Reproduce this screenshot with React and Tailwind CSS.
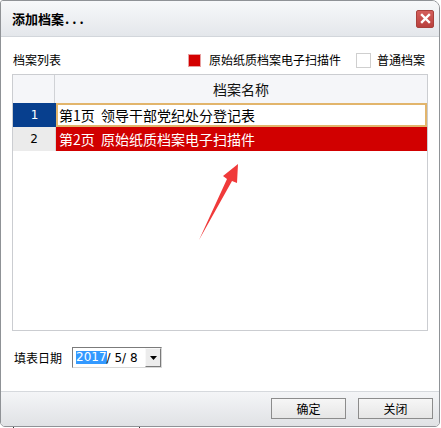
import React from "react";

const font = { fontFamily: '"Noto Sans CJK SC", "Noto Sans", sans-serif' };

export default function App() {
  return (
    <div className="relative w-[441px] h-[428px] bg-white overflow-hidden" style={font}>
      <div className="flex flex-col w-[440px] h-[427px] border border-[#8f9296] rounded-tr-[8px] rounded-tl-[3px] rounded-b-[5px] overflow-hidden">
        {/* title bar */}
        <div className="h-[36px] shrink-0 flex items-center justify-between pl-[11px] pr-[5px] border-b border-[#d2d6db] bg-gradient-to-b from-[#f7f8fa] to-[#e4e7eb]">
          <span className="text-[13px] font-bold text-black leading-none">添加档案<span className="tracking-[3px] ml-[1px]">...</span></span>
          <div className="w-[18px] h-[18px] rounded-[2px] bg-gradient-to-b from-[#d45e5b] to-[#b9403d] border border-[#a8403c] flex items-center justify-center">
            <svg width="11" height="11" viewBox="0 0 11 11">
              <path d="M2 2 L9 9 M9 2 L2 9" stroke="white" strokeWidth="2.4" strokeLinecap="square" />
            </svg>
          </div>
        </div>

        {/* body */}
        <div className="flex-1 flex flex-col bg-white px-[11px] pt-[11px]">
          <div className="h-[24px] flex items-center text-[12px] text-black">
            <span className="ml-[1px]">档案列表</span>
            <div className="flex-1" />
            <div className="w-[13px] h-[13px] bg-[#d40000] border border-[#e8a0a0]" />
            <span className="ml-[8px]">原始纸质档案电子扫描件</span>
            <div className="ml-[15px] w-[15px] h-[15px] bg-white border border-[#cfcfcf]" />
            <span className="ml-[6px] mr-[3px]">普通档案</span>
          </div>

          {/* table */}
          <div className="mt-[2px] h-[257px] border border-[#cbcdd1] flex flex-col bg-white">
            <div className="h-[28px] flex bg-[#f5f6f9] text-[14px]">
              <div className="w-[42px] border-r border-[#d0d2d6]" />
              <div className="flex-1 flex items-center justify-center text-[#111]">档案名称</div>
            </div>
            <div className="h-[24px] flex">
              <div className="w-[43px] bg-[#073f8e] text-white text-[12px] flex items-center justify-center" style={{ fontFamily: '"DejaVu Sans", sans-serif' }}>1</div>
              <div className="flex-1 border-2 border-[#e2b56c] bg-white flex items-center pl-[1px] text-[14px] text-black whitespace-pre">第1页  领导干部党纪处分登记表</div>
            </div>
            <div className="h-[24px] flex">
              <div className="w-[43px] bg-[#ebebeb] border-r border-[#d6d6d6] text-black text-[12px] flex items-center justify-center" style={{ fontFamily: '"DejaVu Sans", sans-serif' }}>2</div>
              <div className="flex-1 bg-[#d10000] flex items-center pl-[3px] text-[14px] text-white whitespace-pre">第2页  原始纸质档案电子扫描件</div>
            </div>
          </div>

          {/* date row */}
          <div className="mt-[16px] flex items-center">
            <span className="ml-[2px] text-[12px] text-black">填表日期</span>
            <div className="ml-[10px] w-[90px] h-[21px] flex border-t border-l border-[#7b7b7b] border-b border-r border-b-[#d8d8d8] border-r-[#d8d8d8] bg-white">
              <div className="flex-1 flex items-center pl-[3px] text-[12px] text-black" style={{ fontFamily: '"DejaVu Sans", sans-serif' }}>
                <span className="bg-[#3399ff] text-white leading-[13px]">2017</span>
                <span className="whitespace-pre">/ 5/ 8</span>
              </div>
              <div className="w-[16px] h-[19px] bg-[#ececec] border-r border-b border-[#7a7a7a] border-l border-t border-l-[#f8f8f8] border-t-[#f8f8f8] flex items-center justify-center">
                <svg width="7" height="4" viewBox="0 0 7 4"><path d="M0 0 H7 L3.5 4 Z" fill="#000" /></svg>
              </div>
            </div>
          </div>
        </div>

        {/* footer */}
        <div className="h-[35px] shrink-0 border-t border-[#d6d9dd] bg-gradient-to-b from-[#f4f5f7] to-[#e0e2e5] flex items-start justify-end pt-[6px] pr-[6px] gap-[12px]">
          <div className="w-[75px] h-[21px] border border-[#8c8c8c] bg-gradient-to-b from-[#f6f6f6] to-[#e6e6e6] flex items-center justify-center text-[12px] text-black">确定</div>
          <div className="w-[75px] h-[21px] border border-[#8c8c8c] bg-gradient-to-b from-[#f6f6f6] to-[#e6e6e6] flex items-center justify-center text-[12px] text-black">关闭</div>
        </div>
      </div>

      {/* red annotation arrow */}
      <svg className="absolute left-0 top-0 pointer-events-none" width="441" height="428" viewBox="0 0 441 428">
        <polygon points="199,240 227,179 223,176 238,164 237,183 232,181" fill="#f03a3a" />
      </svg>
      <div className="absolute left-[13px] top-[427px] w-[1px] h-[1px] bg-[#333]" />
      <div className="absolute left-[139px] top-[427px] w-[1px] h-[1px] bg-[#333]" />
    </div>
  );
}
